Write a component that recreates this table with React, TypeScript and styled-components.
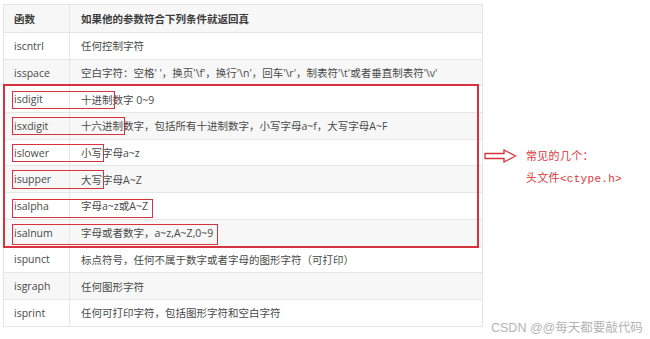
import styled, { createGlobalStyle } from 'styled-components';

const GlobalStyle = createGlobalStyle`
    html, body {
        margin: 0;
        padding: 0;
        background: #ffffff;
    }
`;

const Page = styled.div`
    position: relative;
    width: 650px;
    height: 339px;
    display: flex;
    align-items: flex-start;
    padding: 4px 0 0 3px;
    box-sizing: border-box;
    font-family: "Open Sans", "Noto Sans CJK SC", sans-serif;
`;

const TableWrap = styled.div`
    position: relative;
    width: 480px;
    border: 1px solid #e4e4e4;
    border-bottom: none;
    box-sizing: border-box;
`;

const Row = styled.div<{ $stripe?: boolean; $head?: boolean }>`
    display: grid;
    grid-template-columns: 66px 1fr;
    height: ${(p) => (p.$head ? '28px' : '26.7px')};
    box-sizing: border-box;
    border-bottom: 1px solid #e6e6e6;
    background: ${(p) => (p.$stripe ? '#f7f7f7' : '#ffffff')};
    font-size: 10.5px;
    font-weight: ${(p) => (p.$head ? 700 : 400)};
    color: ${(p) => (p.$head ? '#3c3c3c' : '#4a4a4a')};
`;

const Cell = styled.div<{ $first?: boolean }>`
    display: flex;
    align-items: center;
    padding-left: ${(p) => (p.$first ? '10px' : '11px')};
    border-right: ${(p) => (p.$first ? '1px solid #e6e6e6' : 'none')};
    white-space: nowrap;
    overflow: hidden;
`;

// red annotation boxes drawn over the table
const Mark = styled.div<{ $thick?: boolean }>`
    position: absolute;
    border: ${(p) => (p.$thick ? '2px' : '1.5px')} solid #d8323e;
    box-sizing: border-box;
    pointer-events: none;
`;

const Note = styled.div`
    display: flex;
    align-items: flex-start;
    margin-top: 145px;
    margin-left: 1px;
    gap: 9px;
`;

const NoteText = styled.div`
    margin-top: -3px;
    font-family: "Liberation Mono", "Noto Sans CJK SC", monospace;
    font-size: 11px;
    line-height: 22px;
    color: #e0353b;
    letter-spacing: 0.3px;
`;

const Watermark = styled.div`
    position: absolute;
    left: 491px;
    top: 317px;
    font-family: "Liberation Sans", "Noto Sans CJK SC", sans-serif;
    font-size: 12.5px;
    color: #b4b4b4;
`;

const rows: [string, string][] = [
    ['iscntrl', '任何控制字符'],
    ['isspace', "空白字符：空格' '，换页'\\f'，换行'\\n'，回车'\\r'，制表符'\\t'或者垂直制表符'\\v'"],
    ['isdigit', '十进制数字 0~9'],
    ['isxdigit', '十六进制数字，包括所有十进制数字，小写字母a~f，大写字母A~F'],
    ['islower', '小写字母a~z'],
    ['isupper', '大写字母A~Z'],
    ['isalpha', '字母a~z或A~Z'],
    ['isalnum', '字母或者数字，a~z,A~Z,0~9'],
    ['ispunct', '标点符号，任何不属于数字或者字母的图形字符（可打印）'],
    ['isgraph', '任何图形字符'],
    ['isprint', '任何可打印字符，包括图形字符和空白字符'],
];

// [top, width, height] relative to the table, left is fixed
const marks: [number, number, number][] = [
    [86, 103, 18],
    [112, 113, 18],
    [139, 92, 18],
    [165, 92, 19],
    [194, 141, 19],
    [219, 206, 21],
];

const Arrow = () => (
    <svg width="33" height="14" viewBox="0 0 33 14">
        <path
            d="M1 4.5 H20 V1 L31.5 7 L20 13 V9.5 H1 Z"
            fill="none"
            stroke="#d8323e"
            strokeWidth="1.3"
            strokeLinejoin="miter"
        />
    </svg>
);

const App = () => {
    return (
        <>
            <GlobalStyle />
            <Page>
                <TableWrap>
                    <Row $head $stripe>
                        <Cell $first>函数</Cell>
                        <Cell>如果他的参数符合下列条件就返回真</Cell>
                    </Row>
                    {rows.map(([fn, desc], i) => (
                        <Row key={fn} $stripe={i % 2 === 1}>
                            <Cell $first>{fn}</Cell>
                            <Cell>{desc}</Cell>
                        </Row>
                    ))}
                    <Mark $thick style={{ left: -1, top: 79, width: 476, height: 164 }} />
                    {marks.map(([top, width, height]) => (
                        <Mark key={top} style={{ left: 8, top, width, height }} />
                    ))}
                </TableWrap>
                <Note>
                    <Arrow />
                    <NoteText>
                        常见的几个：
                        <br />
                        头文件&lt;ctype.h&gt;
                    </NoteText>
                </Note>
                <Watermark>CSDN @@每天都要敲代码</Watermark>
            </Page>
        </>
    );
};

export default App;
